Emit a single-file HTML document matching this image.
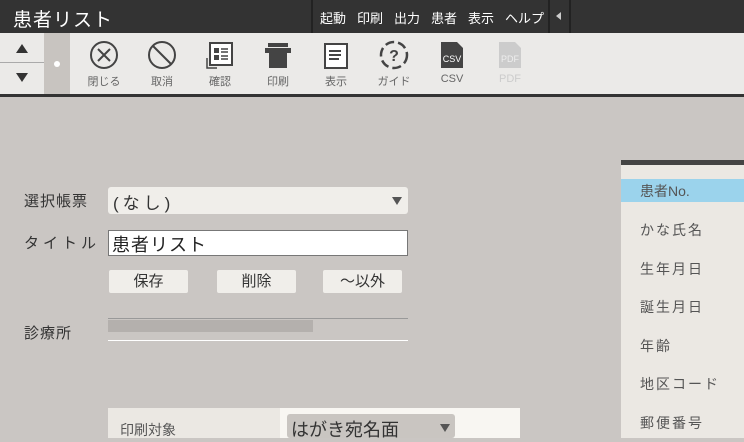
<html><head><style>
body{margin:0;width:744px;height:438px;overflow:hidden;background:#cac6c3;font-family:"Liberation Sans","Noto Sans CJK JP",sans-serif;position:relative}
.a{position:absolute}
.lbl{position:absolute;top:73px;width:50px;text-align:center;font-size:11px;color:#666}
.ic{position:absolute;top:40px}
.fl{font-size:15px;color:#333;letter-spacing:1px}
.btn{position:absolute;top:270px;height:23px;background:#f0eeea;border-radius:2px;font-size:15px;color:#333;text-align:center;line-height:23px}
.li{position:absolute;left:640px;font-size:14px;color:#555;letter-spacing:2px}
.m{position:absolute;top:8px;font-size:13px;color:#fff}
</style></head><body>
<div class="a" style="left:0;top:0;width:744px;height:33px;background:#333"></div>
<div class="a" style="left:13px;top:5px;font-size:19px;color:#fff;letter-spacing:1px">患者リスト</div>
<div class="a" style="left:311px;top:0;width:2px;height:33px;background:#222"></div>
<div class="a" style="top:0;width:2px;height:33px;background:#222;left:548px"></div>
<div class="a" style="left:569px;top:0;width:2px;height:33px;background:#222"></div>
<div class="m" style="left:320px">起動</div><div class="m" style="left:357px">印刷</div><div class="m" style="left:394px">出力</div><div class="m" style="left:431px">患者</div><div class="m" style="left:468px">表示</div><div class="m" style="left:505px">ヘルプ</div>
<div class="a" style="left:556px;top:12px;width:0;height:0;border-top:4px solid transparent;border-bottom:4px solid transparent;border-right:5px solid #ccc"></div>
<div class="a" style="left:0;top:33px;width:744px;height:61px;background:#ebeae8"></div>
<div class="a" style="left:0;top:94px;width:744px;height:3px;background:#333"></div>
<div class="a" style="left:0;top:62px;width:44px;height:1px;background:#aaa"></div>
<div class="a" style="left:16px;top:44px;border-left:6px solid transparent;border-right:6px solid transparent;border-bottom:9px solid #333"></div>
<div class="a" style="left:16px;top:73px;border-left:6px solid transparent;border-right:6px solid transparent;border-top:9px solid #333"></div>
<div class="a" style="left:44px;top:33px;width:26px;height:61px;background:#c8c4c0"></div>
<div class="a" style="left:54px;top:61px;width:6px;height:6px;border-radius:3px;background:#fff"></div>
<svg class="ic" style="left:89px" width="30" height="30"><circle cx="15" cy="15" r="13" fill="none" stroke="#444" stroke-width="2"/><path d="M9 9L21 21M21 9L9 21" stroke="#444" stroke-width="2"/></svg>
<svg class="ic" style="left:147px" width="30" height="30"><circle cx="15" cy="15" r="13" fill="none" stroke="#444" stroke-width="2"/><path d="M6 6L24 24" stroke="#444" stroke-width="2"/></svg>
<svg class="ic" style="left:205px" width="30" height="30"><rect x="5" y="3" width="22" height="22" fill="#fff" stroke="#444" stroke-width="2"/><rect x="9" y="8" width="5" height="5" fill="#444"/><rect x="9" y="15" width="5" height="5" fill="#444"/><path d="M16 9h7M16 12h7M16 16h7M16 19h7M2 18v10h10" stroke="#444" stroke-width="1.5" fill="none"/></svg>
<svg class="ic" style="left:263px" width="30" height="30"><rect x="5" y="3" width="20" height="4" fill="#444"/><rect x="2" y="8" width="26" height="5" fill="#444"/><rect x="6" y="13" width="18" height="15" fill="#444"/></svg>
<svg class="ic" style="left:321px" width="30" height="30"><rect x="4" y="4" width="22" height="24" fill="#fff" stroke="#444" stroke-width="2"/><path d="M8 11h12M8 15h12M8 19h10" stroke="#444" stroke-width="2"/></svg>
<svg class="ic" style="left:379px" width="30" height="30"><circle cx="15" cy="15" r="13" fill="none" stroke="#444" stroke-width="2.5" stroke-dasharray="9 4"/><text x="15" y="21" font-size="16" font-weight="bold" text-anchor="middle" fill="#444" font-family="Liberation Sans">?</text></svg>
<svg class="ic" style="left:437px" width="30" height="30"><path d="M4 2h16l6 6v20H4z" fill="#444"/><text x="15" y="22" font-size="9" text-anchor="middle" fill="#fff" font-family="Liberation Sans">CSV</text></svg>
<svg class="ic" style="left:495px" width="30" height="30"><path d="M4 2h16l6 6v20H4z" fill="#ccc"/><text x="15" y="22" font-size="9" text-anchor="middle" fill="#eee" font-family="Liberation Sans">PDF</text></svg>
<div class="lbl" style="left:79px">閉じる</div><div class="lbl" style="left:137px">取消</div><div class="lbl" style="left:195px">確認</div><div class="lbl" style="left:253px">印刷</div><div class="lbl" style="left:311px">表示</div><div class="lbl" style="left:369px">ガイド</div><div class="lbl" style="left:427px">CSV</div><div class="lbl" style="left:485px;color:#ccc">PDF</div>
<div class="a fl" style="left:24px;top:190px">選択帳票</div>
<div class="a" style="left:108px;top:187px;width:300px;height:27px;background:#f0eeea;border-radius:3px"></div>
<div class="a" style="left:113px;top:189px;font-size:17px;color:#333;letter-spacing:4px">(なし)</div>
<div class="a" style="left:392px;top:197px;border-left:5px solid transparent;border-right:5px solid transparent;border-top:8px solid #555"></div>
<div class="a fl" style="left:24px;top:232px;letter-spacing:4px">タイトル</div>
<div class="a" style="left:108px;top:230px;width:298px;height:24px;background:#fff;border:1px solid #777"></div>
<div class="a" style="left:112px;top:231px;font-size:18px;color:#222;letter-spacing:1px">患者リスト</div>
<div class="btn" style="left:109px;width:79px">保存</div>
<div class="btn" style="left:217px;width:79px">削除</div>
<div class="btn" style="left:323px;width:79px">〜以外</div>
<div class="a fl" style="left:24px;top:322px">診療所</div>
<div class="a" style="left:108px;top:318px;width:300px;height:1px;background:#999"></div>
<div class="a" style="left:108px;top:320px;width:205px;height:12px;background:#b4b0ad"></div>
<div class="a" style="left:108px;top:340px;width:300px;height:1px;background:#fff"></div>
<div class="a" style="left:108px;top:408px;width:180px;height:30px;background:#ebe8e3"></div>
<div class="a" style="left:280px;top:408px;width:240px;height:30px;background:#f8f6f2"></div>
<div class="a" style="left:120px;top:420px;font-size:14px;color:#555">印刷対象</div>
<div class="a" style="left:287px;top:414px;width:168px;height:24px;background:#c9c5c1;border-radius:3px"></div>
<div class="a" style="left:291px;top:416px;font-size:18px;color:#333">はがき宛名面</div>
<div class="a" style="left:440px;top:424px;border-left:5px solid transparent;border-right:5px solid transparent;border-top:8px solid #555"></div>
<div class="a" style="left:621px;top:160px;width:123px;height:278px;background:#ebe8e3"></div>
<div class="a" style="left:621px;top:160px;width:123px;height:5px;background:#444"></div>
<div class="a" style="left:621px;top:179px;width:123px;height:23px;background:#9bd3ec"></div>
<div class="li" style="top:181px;letter-spacing:0">患者No.</div>
<div class="li" style="top:220px">かな氏名</div>
<div class="li" style="top:259px">生年月日</div>
<div class="li" style="top:297px">誕生月日</div>
<div class="li" style="top:336px">年齢</div>
<div class="li" style="top:374px">地区コード</div>
<div class="li" style="top:413px">郵便番号</div>
</body></html>
